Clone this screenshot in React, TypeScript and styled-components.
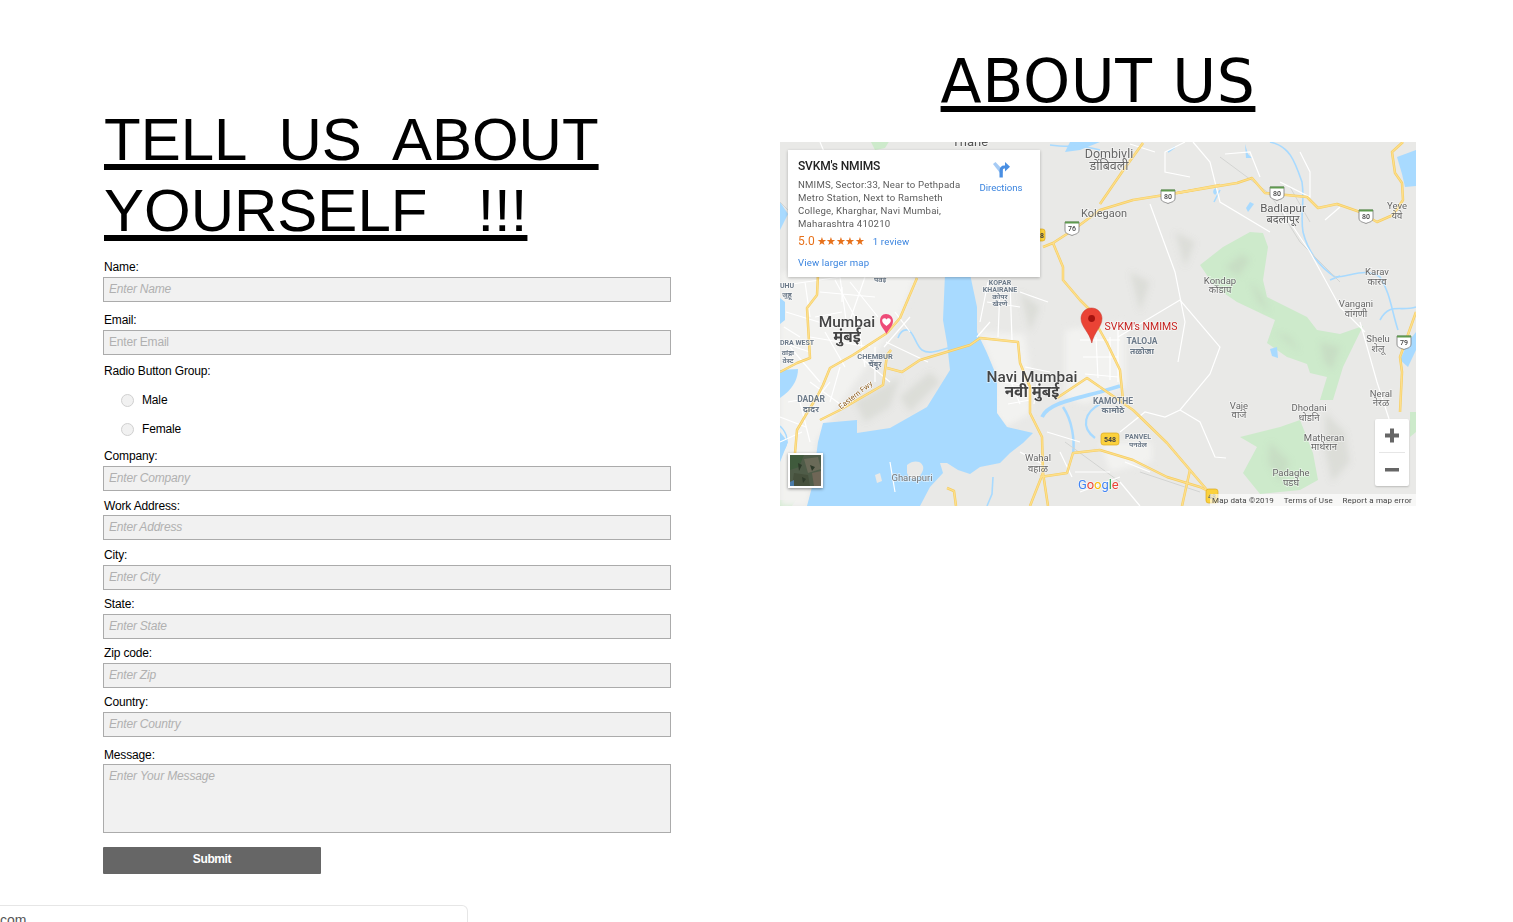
import React from "react";
import styled, { createGlobalStyle } from "styled-components";

const Global = createGlobalStyle`
  html, body { margin: 0; padding: 0; background: #fff; height: 922px; overflow: hidden; }
  body { font-family: "Liberation Sans", Arial, sans-serif; color: #000; }
  * { box-sizing: border-box; }
`;

const Page = styled.div`
  display: flex;
  align-items: flex-start;
  width: 1513px;
  height: 905px;
  padding-left: 103px;
`;
const FormColumn = styled.section`
  width: 568px;
  padding-top: 104px;
`;
const InfoColumn = styled.section`
  width: 636px;
  margin-left: 109px;
  padding-top: 46px;
`;
const Heading = styled.h1`
  margin: 0;
  font-size: 60px;
  font-weight: 400;
  line-height: 71px;
  text-decoration: underline;
  text-decoration-thickness: 6px;
  text-decoration-skip-ink: none;
  text-underline-offset: 4px;
  white-space: pre-wrap;
`;
const FormHeading = styled(Heading)`
  margin-left: 1px;
  margin-bottom: 14px;
`;
const AboutHeading = styled(Heading)`
  text-align: center;
  margin-bottom: 25px;
  font-family: "DejaVu Sans", Verdana, sans-serif;
  letter-spacing: 0.6px;
`;
const Field = styled.div<{ $top: number }>`
  margin-top: ${(p) => p.$top}px;
`;
const Label = styled.label<{ $gap?: number }>`
  display: block;
  font-size: 12px;
  line-height: 14px;
  letter-spacing: -0.15px;
  margin-left: 1px;
  margin-bottom: ${(p) => p.$gap ?? 3}px;
`;
const Input = styled.input<{ $plain?: boolean }>`
  display: block;
  width: 568px;
  height: 25px;
  padding: 0 5px 2px;
  background: #f1f1f1;
  border: 1px solid #ababab;
  font: 12px "Liberation Sans", Arial, sans-serif;
  letter-spacing: -0.2px;
  &::placeholder {
    color: #b0b0b0;
    font-style: ${(p) => (p.$plain ? "normal" : "italic")};
    opacity: 1;
  }
`;
const TextArea = styled.textarea`
  display: block;
  width: 568px;
  height: 69px;
  padding: 4px 5px;
  background: #f1f1f1;
  border: 1px solid #ababab;
  resize: none;
  font: 12px "Liberation Sans", Arial, sans-serif;
  letter-spacing: -0.15px;
  &::placeholder { color: #b0b0b0; font-style: italic; opacity: 1; }
`;
const RadioRow = styled.label`
  display: flex;
  align-items: center;
  height: 14px;
  margin: 15px 0 0 18px;
  font-size: 12px;
  letter-spacing: -0.15px;
`;
const RadioMark = styled.span`
  width: 13px;
  height: 13px;
  border-radius: 50%;
  background: #f1f1f1;
  border: 1px solid #d0d0d0;
  margin-right: 8px;
`;
const SubmitButton = styled.button`
  display: block;
  width: 218px;
  height: 27px;
  margin-top: 14px;
  padding: 0 0 3px;
  border: 0;
  border-radius: 1px;
  background: #666;
  color: #fff;
  font: 700 12px "Liberation Sans", Arial, sans-serif;
  letter-spacing: -0.4px;
`;
const FooterBox = styled.div`
  width: 468px;
  height: 30px;
  padding-top: 6px;
  border: 1px solid #e6e6e6;
  border-left: 0;
  border-radius: 0 6px 0 0;
  font-size: 14px;
  color: #555;
`;
const MapFrame = styled.div`
  position: relative;
  width: 636px;
  height: 364px;
  overflow: hidden;
  background: #e9e9e7;
  font-family: Roboto, sans-serif;
`;
const MapArt = styled.svg`
  display: block;
  width: 636px;
  height: 364px;
`;
const InfoCard = styled.div`
  position: absolute;
  left: 8px;
  top: 8px;
  width: 252px;
  height: 127px;
  padding: 9px 10px;
  background: #fff;
  box-shadow: 0 1px 3px rgba(0, 0, 0, 0.25);
  display: flex;
  justify-content: space-between;
`;
const CardMain = styled.div`
  width: 170px;
`;
const PlaceName = styled.div`
  font-size: 12px;
  line-height: 15px;
  font-weight: 500;
  letter-spacing: -0.15px;
  color: #222;
`;
const Address = styled.div`
  margin-top: 4px;
  font-size: 9.6px;
  line-height: 13px;
  letter-spacing: 0.2px;
  color: #5b5b5b;
`;
const RatingRow = styled.div`
  display: flex;
  align-items: center;
  height: 16px;
  margin-top: 3px;
  font-size: 9.6px;
  letter-spacing: 0.2px;
  color: #3a84df;
`;
const Score = styled.span`
  font-size: 12px;
  letter-spacing: 0;
  color: #e7711b;
`;
const Stars = styled.span`
  font-size: 11px;
  letter-spacing: -0.4px;
  color: #e7711b;
  margin: 0 8px 0 2px;
`;
const LargerLink = styled.div`
  margin-top: 8px;
  font-size: 9.6px;
  letter-spacing: 0.15px;
  color: #3a84df;
`;
const DirectionsBox = styled.div`
  display: flex;
  flex-direction: column;
  align-items: center;
  width: 46px;
  margin: 2px 6px 0 0;
  font-size: 9.6px;
  color: #3a84df;
`;
const DirectionsIcon = styled.svg`
  width: 18px;
  height: 17px;
  margin-bottom: 4px;
`;
const Zoomer = styled.div`
  position: absolute;
  right: 7px;
  top: 277px;
  width: 34px;
  height: 67px;
  background: #fff;
  border-radius: 2px;
  box-shadow: 0 1px 2px rgba(0, 0, 0, 0.2);
  display: flex;
  flex-direction: column;
  align-items: center;
`;
const ZoomKey = styled.svg`
  width: 34px;
  height: 33px;
`;
const ZoomRule = styled.div`
  width: 26px;
  height: 1px;
  background: #e6e6e6;
`;
const Thumb = styled.svg`
  position: absolute;
  left: 8px;
  top: 311px;
  width: 35px;
  height: 35px;
  border: 2px solid #fff;
  box-shadow: 0 1px 3px rgba(0, 0, 0, 0.45);
`;
const Attribution = styled.div`
  position: absolute;
  right: 0;
  bottom: 0;
  width: 206px;
  height: 12px;
  padding: 0 4px 0 2px;
  display: flex;
  justify-content: space-between;
  align-items: center;
  background: rgba(255, 255, 255, 0.62);
  font-size: 8px;
  letter-spacing: 0.15px;
  color: #444;
`;

const urban = [
  "M0,130 L137,130 L120,176 L100,205 L60,262 L36,300 L28,364 L0,364 Z",
  "M198,190 L245,192 L252,240 L250,272 L225,285 L214,270 L216,232 Z",
  "M285,188 L345,180 L345,245 L305,262 L285,255 Z",
  "M320,300 L372,300 L372,320 L330,330 Z",
];
const water = [
  "M165,132 L190,132 L197,165 L197,190 L207,211 L217,235 L217,271 L227,285 L253,291 L243,301 L230,311 L220,321 L200,325 L190,332 L178,328 L167,321 L160,321 L163,331 L150,345 L140,364 L27,364 L32,345 L38,300 L43,281 L77,278 L77,291 L110,286 L147,265 L170,228 L167,201 L163,178 Z",
  "M0,228 L18,227 C18,238 12,248 0,256 Z",
  "M0,156 L5,160 L5,178 L0,182 Z",
  "M0,60 L8,72 L0,88 Z",
  "M617,15 L636,8 L636,44 L625,45 L622,32 Z",
  "M290,0 L320,0 L300,8 L285,10 Z",
  "M636,190 L628,200 L620,218 L628,225 L636,208 Z",
  "M436,46 C438,50 436,54 434,52 C432,50 434,46 436,46 Z",
  "M470,60 L474,62 L468,70 L466,66 Z",
  "M490,207 L497,205 L498,216 L492,214 Z",
  "M465,2 L468,12 L472,16 L466,16 Z",
  "M0,290 L8,300 L0,320 Z",
];
const creeks: [string, number][] = [
  ["M270,3 C290,6 300,2 320,8", 1.6],
  ["M490,0 C510,4 515,20 522,40 C525,60 520,70 523,90 C528,110 540,125 555,135 C570,135 585,125 600,135 C610,150 612,170 618,188", 1.6],
  ["M118,196 C120,190 123,187 128,188 C134,190 136,204 142,208 C148,212 155,210 168,206", 1.6],
  ["M262,275 C268,262 290,258 320,250 L340,244", 3.8],
  ["M283,265 C292,278 295,298 293,312", 2.5],
  ["M320,262 C305,270 300,285 315,296", 2.2],
  ["M213,335 L212,352 L207,364", 1.6],
  ["M600,178 C610,160 620,170 636,165", 1.6],
  ["M550,138 L560,134", 1.6],
  ["M440,48 L434,60", 1.6],
  ["M395,5 L388,10", 1.6],
  ["M0,284 C8,292 10,300 2,310", 1.6],
];
const greens = [
  "M420,123 L443,105 L470,90 L483,91 L488,105 L483,138 L487,155 L527,175 L537,188 L560,192 L583,184 L563,225 L553,258 L540,258 L547,235 L530,231 L527,222 L507,215 L487,201 L495,178 L457,160 L435,145 Z",
  "M460,295 L500,285 L520,278 L533,311 L538,338 L520,348 L480,352 L463,331 L477,305 Z",
  "M90,-2 L110,-2 L105,6 L95,8 Z",
  "M630,270 L636,270 L636,290 L630,295 Z",
  "M0,358 L16,358 L12,364 L0,364 Z",
  "M103,150 L110,143 L111,146 L106,155 Z",
];
const shades = [
  "M445,125 L462,112 L470,118 L458,135 Z",
  "M470,140 L478,160 L490,170 L480,150 Z",
  "M495,190 L520,210 L510,195 Z",
  "M540,200 L560,205 L552,228 L544,220 Z",
  "M545,270 L565,290 L570,320 L552,340 L545,310 Z",
  "M490,300 L510,320 L500,340 L488,320 Z",
  "M120,255 L150,230 L160,240 L130,270 Z",
  "M75,260 L120,235 L110,265 L85,280 Z",
  "M395,90 L415,100 L405,125 Z",
  "M350,130 L370,140 L360,170 Z",
  "M240,150 L260,165 L250,190 Z",
];
const highways = [
  "M263,105 L273,101 L293,88 L320,68 L353,58 L397,51 L457,41 L472,36 L485,51 L527,55 L538,66 L557,62 L580,70 L597,80 L613,73 L623,58 L622,41 L615,31 L612,10 L623,0",
  "M320,62 L342,30 L363,1",
  "M397,51 L440,43",
  "M273,101 L283,125 L283,138 L300,158 L310,168 L318,185 L327,201 L340,228 L343,258",
  "M320,245 L353,268 L387,301 L410,328 L427,348",
  "M320,308 L353,318 L387,335 L420,345 L434,352",
  "M410,328 L402,364",
  "M38,133 L37,153 L27,166 L30,216 L17,221 L0,230",
  "M137,136 L120,176 L107,191 L73,213 L50,226 L43,243 L38,253 L27,271 L17,288 L15,311",
  "M40,278 L60,268 L103,243 L107,213 L111,208",
  "M107,226 L122,230 L140,218 L190,203 L200,196 L238,200 L240,221 L250,245 L250,271 L262,295 L263,331 L250,364",
  "M260,335 L287,331 L293,311 L320,308",
  "M277,256 L307,236 L320,245",
  "M263,331 L268,364",
  "M167,346 L174,349 L176,364",
  "M620,270 L622,230 L620,215 L636,170",
];
const lanes = [
  "M12,142 L60,135 M25,140 L30,175 M60,135 L66,178 M6,170 L55,185 M0,200 L30,210 M45,190 L65,225 M60,225 L50,260 M78,180 L85,225 M30,240 L60,262 M20,260 L30,300 M0,300 L22,290 M70,140 L98,175",
  "M115,170 L130,190 M130,175 L104,205 M4,185 L20,195 M40,150 L95,155 M55,138 L75,175 M85,135 L70,178 M35,175 L62,170 M30,195 L90,205 M10,205 L40,240 M8,260 L36,255 M30,265 L50,240 M0,275 L26,285 M62,145 L62,160",
  "M106,200 L148,220 M95,205 L95,240 M80,215 L110,240",
  "M200,180 L208,140 M220,145 L218,195 M230,140 L232,198 M240,150 L268,160 M207,160 L240,165 M197,195 L210,180",
  "M225,240 L270,248 M228,262 L250,258 M245,225 L270,230 M228,232 L240,262 M258,235 L254,262 M267,290 L300,300 M240,310 L262,322 M280,310 L292,335 M295,330 L330,330",
  "M300,198 L340,198 M303,215 L338,215 M305,232 L338,235 M316,195 L318,236 M330,195 L330,238 M338,180 L338,240",
  "M338,195 L400,158 L440,205 L430,232 L400,268 L385,275 L365,270 L340,290 M400,268 L420,280 L435,315 L446,316",
  "M413,0 L430,20 L440,60 L490,90 M405,0 L385,10 L385,30 L410,35 M445,12 L470,10 L480,35 M500,40 L530,55 L530,30 L520,10",
  "M370,62 L395,130 L405,180 L398,220 M500,65 L530,110 L560,165 L585,190 M560,65 L545,78 M580,180 L597,240 L610,280 M375,10 L350,2",
  "M120,10 L108,30 M40,0 L65,60 L110,70 L140,80",
  "M110,320 L115,350 M300,350 L340,335 M340,340 L360,364 M345,320 L370,330",
];
const greyLines = ["M440,15 L490,52 L520,100 L560,140", "M510,45 L530,80 M360,330 L420,350 M285,300 L340,340 M0,60 L20,80"];

const labels: [number, number, string, number, string, number?][] = [
  [190, 1, "Thane", 13, "#555"],
  [329, 13, "Dombivli", 12.5, "#666"], [329, 25, "डोंबिवली", 12.5, "#666"],
  [324, 72, "Kolegaon", 11, "#666"],
  [503, 67, "Badlapur", 11.5, "#5a5a5a"], [503, 78, "बदलापूर", 11, "#5a5a5a"],
  [617, 64, "Yeve", 9.5, "#666"], [617, 74, "येवे", 9.5, "#666"],
  [440, 139, "Kondap", 9.5, "#666"], [440, 148, "कोंडाप", 9.5, "#666"],
  [597, 130, "Karav", 9.5, "#666"], [597, 140, "कारव", 9.5, "#666"],
  [576, 162, "Vangani", 9.5, "#666"], [576, 172, "वांगणी", 9.5, "#666"],
  [598, 197, "Shelu", 9.5, "#666"], [598, 207, "शेलू", 9.5, "#666"],
  [601, 252, "Neral", 9.5, "#666"], [601, 261, "नेरळ", 9.5, "#666"],
  [459, 264, "Vaje", 9.5, "#666"], [459, 273, "वाजे", 9.5, "#666"],
  [529, 266, "Dhodani", 9.5, "#666"], [529, 276, "धोडनि", 9.5, "#666"],
  [544, 296, "Matheran", 9.5, "#666"], [544, 305, "माथेरान", 9.5, "#666"],
  [511, 331, "Padaghe", 9.5, "#666"], [511, 341, "पडघे", 9.5, "#666"],
  [362, 200, "TALOJA", 8.5, "#6c7a89", 700], [362, 210, "तळोजा", 8.5, "#6c7a89", 700],
  [333, 260, "KAMOTHE", 8.5, "#6c7a89", 700], [333, 269, "कामोठे", 8.5, "#6c7a89", 700],
  [358, 295, "PANVEL", 7, "#6c7a89", 700], [358, 303, "पनवेल", 7, "#6c7a89", 700],
  [252, 236, "Navi Mumbai", 15.4, "#444", 500], [252, 251, "नवी मुंबई", 15.4, "#444", 700],
  [67, 181, "Mumbai", 15.4, "#444", 500], [67, 196, "मुंबई", 15.4, "#444", 700],
  [95, 215, "CHEMBUR", 7.5, "#6c7a89", 700], [95, 223, "चेंबूर", 7.5, "#6c7a89", 700],
  [31, 258, "DADAR", 8.5, "#6c7a89", 700], [31, 268, "दादर", 8.5, "#6c7a89", 700],
  [220, 141, "KOPAR", 7, "#6c7a89", 700], [220, 148, "KHAIRANE", 7, "#6c7a89", 700],
  [220, 155, "कोपर", 7, "#6c7a89", 700], [220, 162, "खैरणे", 7, "#6c7a89", 700],
  [258, 316, "Wahal", 9.5, "#666"], [258, 327, "वहाळ", 9.5, "#666"],
  [132, 336, "Gharapuri", 9.5, "#777"],
  [17, 201, "DRA WEST", 7, "#6c7a89", 700], [8, 211, "वांद्रा", 7, "#6c7a89", 700], [8, 219, "वेस्ट", 7, "#6c7a89", 700],
  [7, 144, "UHU", 7, "#6c7a89", 700], [7, 153, "जुहू", 7, "#6c7a89", 700],
  [100, 138, "पवई", 7, "#6c7a89", 700],
  [361, 185, "SVKM's NMIMS", 10.5, "#c5221f"],
];

const shields: [number, number, string][] = [
  [388, 54, "80"], [497, 51, "80"], [586, 74, "80"], [292, 86, "76"], [624, 200, "79"],
];

const App: React.FC = () => (
  <>
    <Global />
    <Page>
      <FormColumn>
        <FormHeading>
          {"TELL  US  ABOUT"}
          <br />
          {"YOURSELF   !!!"}
        </FormHeading>
        <Field $top={0}>
          <Label>Name:</Label>
          <Input placeholder="Enter Name" />
        </Field>
        <Field $top={11}>
          <Label>Email:</Label>
          <Input $plain placeholder="Enter Email" />
        </Field>
        <Field $top={9}>
          <Label>Radio Button Group:</Label>
          <RadioRow><RadioMark />Male</RadioRow>
          <RadioRow><RadioMark />Female</RadioRow>
        </Field>
        <Field $top={13}>
          <Label>Company:</Label>
          <Input placeholder="Enter Company" />
        </Field>
        <Field $top={8}>
          <Label $gap={2}>Work Address:</Label>
          <Input placeholder="Enter Address" />
        </Field>
        <Field $top={8}>
          <Label>City:</Label>
          <Input placeholder="Enter City" />
        </Field>
        <Field $top={7}>
          <Label>State:</Label>
          <Input placeholder="Enter State" />
        </Field>
        <Field $top={7}>
          <Label>Zip code:</Label>
          <Input placeholder="Enter Zip" />
        </Field>
        <Field $top={7}>
          <Label>Country:</Label>
          <Input placeholder="Enter Country" />
        </Field>
        <Field $top={11}>
          <Label $gap={2}>Message:</Label>
          <TextArea placeholder="Enter Your Message" />
        </Field>
        <SubmitButton>Submit</SubmitButton>
      </FormColumn>
      <InfoColumn>
        <AboutHeading>ABOUT US</AboutHeading>
        <MapFrame>
          <MapArt viewBox="0 0 636 364">
            <defs>
              <filter id="soft" x="-5%" y="-5%" width="110%" height="110%">
                <feGaussianBlur stdDeviation="0.3" />
              </filter>
              <filter id="haze" x="-30%" y="-30%" width="160%" height="160%">
                <feGaussianBlur stdDeviation="3" />
              </filter>
            </defs>
            <g filter="url(#soft)">
              {greens.map((d) => <path key={d} d={d} fill="#cdeacb" />)}
              <g filter="url(#haze)">
                {urban.map((d) => <path key={d} d={d} fill="#f2f2f0" />)}
                {shades.map((d) => <path key={d} d={d} fill="#b9bdb4" opacity="0.28" />)}
              </g>
              {water.map((d) => <path key={d} d={d} fill="#a8daff" />)}
              {creeks.map(([d, w]) => <path key={d} d={d} fill="none" stroke="#a8daff" strokeWidth={w} />)}
              <path d="M127,323 C135,316 145,320 143,328 C140,338 130,340 127,331 Z" fill="#e9e9e7" />
              <path d="M95,333 L100,331 L102,339 L97,341 Z" fill="#e9e9e7" />
              {greyLines.map((d) => <path key={d} d={d} fill="none" stroke="#d3d4d2" strokeWidth="1" />)}
              {lanes.map((d) => <path key={d} d={d} fill="none" stroke="#fff" strokeWidth="1.2" />)}
              {highways.map((d) => <path key={d} d={d} fill="none" stroke="#f5cd62" strokeWidth="2.5" strokeLinejoin="round" />)}
              {highways.map((d) => <path key={d} d={d} fill="none" stroke="#fddf8c" strokeWidth="1.3" strokeLinejoin="round" />)}
            </g>
            {labels.map(([x, y, text, size, color, weight]) => (
              <text
                key={`${x}-${y}-${text}`}
                x={x}
                y={y}
                textAnchor="middle"
                dominantBaseline="middle"
                fontFamily='Roboto, "Noto Sans", "Noto Sans Devanagari", sans-serif'
                fontSize={size}
                fontWeight={weight ?? 400}
                fill={color}
                stroke="#fff"
                strokeOpacity="0.55"
                strokeWidth="1.5"
                paintOrder="stroke"
              >
                {text}
              </text>
            ))}
            <text
              x={0}
              y={0}
              transform="translate(77,255) rotate(-38)"
              textAnchor="middle"
              fontFamily="Roboto, sans-serif"
              fontSize="7.5"
              fill="#8a5a1c"
              stroke="#fff"
              strokeWidth="1.2"
              paintOrder="stroke"
            >
              Eastern Fwy
            </text>
            {shields.map(([x, y, n]) => (
              <g key={`${x}-${y}`} transform={`translate(${x},${y})`}>
                <path d="M-7,-6 L7,-6 L7,2 C7,6 3,6 0,7.5 C-3,6 -7,6 -7,2 Z" fill="#fff" stroke="#777" strokeWidth="0.8" />
                <path d="M-7,-6.5 L7,-6.5 L7,-4.5 L-7,-4.5 Z" fill="#5f9a4e" />
                <text x="0" y="2.5" textAnchor="middle" fontFamily="Roboto, sans-serif" fontSize="7" fontWeight="500" fill="#444">{n}</text>
              </g>
            ))}
            <rect x="321" y="291" width="18" height="12" rx="2.5" fill="#fbd13d" stroke="#dca91d" strokeWidth="0.7" />
            <text x="330" y="300" textAnchor="middle" fontFamily="Roboto, sans-serif" fontSize="7" fontWeight="700" fill="#444">548</text>
            <rect x="426" y="347" width="12" height="14" rx="2.5" fill="#fbd13d" stroke="#dca91d" strokeWidth="0.7" />
            <text x="432" y="357" textAnchor="middle" fontFamily="Roboto, sans-serif" fontSize="7" fontWeight="700" fill="#776">48</text>
            <rect x="256" y="87" width="9" height="12" rx="2.5" fill="#fbd13d" stroke="#dca91d" strokeWidth="0.7" />
            <text x="260" y="96" fontFamily="Roboto, sans-serif" fontSize="7" fontWeight="700" fill="#444">8</text>
            <text x="298" y="347" fontFamily="Roboto, sans-serif" fontSize="13" fontWeight="400" letterSpacing="-0.1" stroke="#fff" strokeOpacity="0.6" strokeWidth="1.5" paintOrder="stroke">
              <tspan fill="#4285f4">G</tspan><tspan fill="#ea4335">o</tspan><tspan fill="#fbbc05">o</tspan><tspan fill="#4285f4">g</tspan><tspan fill="#34a853">l</tspan><tspan fill="#ea4335">e</tspan>
            </text>
            <path d="M106,172 C110,172 113,175 113,179 C113,184 109,187 106.5,192 C104,187 100,184 100,179 C100,175 102,172 106,172 Z" fill="#ee4b78" />
            <path d="M106.5,184 C103,181.5 102.2,180 102.2,178.6 C102.2,176 105.5,175.4 106.5,177.6 C107.5,175.4 110.8,176 110.8,178.6 C110.8,180 110,181.5 106.5,184 Z" fill="#fff" />
            <path d="M311.5,166 C317.5,166 322,170.8 322,176.5 C322,185 314,190 311.8,201 C309.5,190 301,185 301,176.5 C301,170.8 305.5,166 311.5,166 Z" fill="#ea4335" stroke="#c5362c" strokeWidth="0.5" />
            <circle cx="311.6" cy="176.5" r="3.4" fill="#a4130f" />
          </MapArt>
          <InfoCard>
            <CardMain>
              <PlaceName>SVKM's NMIMS</PlaceName>
              <Address>
                NMIMS, Sector:33, Near to Pethpada
                <br />Metro Station, Next to Ramsheth
                <br />College, Kharghar, Navi Mumbai,
                <br />Maharashtra 410210
              </Address>
              <RatingRow>
                <Score>5.0</Score>
                <Stars>★★★★★</Stars>
                1 review
              </RatingRow>
              <LargerLink>View larger map</LargerLink>
            </CardMain>
            <DirectionsBox>
              <DirectionsIcon viewBox="0 0 18 17">
                <path d="M1,3 L3.5,1 L10.5,8.5 L10.5,12 L8,12 Z" fill="#a6cbf5" />
                <path d="M7.5,16.5 L7.5,9.5 C7.5,6.5 9.5,4.5 12,4.5 L13,4.5 L13,1 L18,5.8 L13,10.5 L13,7.5 L12.3,7.5 C11.3,7.5 10.8,8.4 10.8,9.5 L10.8,16.5 Z" fill="#4a8fe3" />
              </DirectionsIcon>
              Directions
            </DirectionsBox>
          </InfoCard>
          <Thumb viewBox="0 0 31 31" preserveAspectRatio="none">
            <rect width="31" height="31" fill="#4f5c48" />
            <path d="M0,0 L14,0 L9,12 L0,15 Z" fill="#3f5a3c" />
            <path d="M14,4 L28,2 L31,14 L18,18 Z" fill="#6a6a58" />
            <path d="M4,18 L18,20 L20,31 L2,31 Z" fill="#46503c" />
            <path d="M22,18 L31,16 L31,31 L24,31 Z" fill="#6f6656" />
            <path d="M0,27 L4,25 L4,31 L0,31 Z" fill="#4b7ba8" />
            <path d="M8,8 L12,10 L9,16 Z M20,10 L25,12 L22,16 Z M12,22 L16,24 L13,28 Z" fill="#2e3a2a" />
          </Thumb>
          <Zoomer>
            <ZoomKey viewBox="0 0 34 33">
              <path d="M10,14.5 L15,14.5 L15,9.5 L19,9.5 L19,14.5 L24,14.5 L24,18.5 L19,18.5 L19,23.5 L15,23.5 L15,18.5 L10,18.5 Z" fill="#666" />
            </ZoomKey>
            <ZoomRule />
            <ZoomKey viewBox="0 0 34 33">
              <rect x="10" y="15" width="14" height="3.5" fill="#666" />
            </ZoomKey>
          </Zoomer>
          <Attribution>
            <span>Map data ©2019</span>
            <span>Terms of Use</span>
            <span>Report a map error</span>
          </Attribution>
        </MapFrame>
      </InfoColumn>
    </Page>
    <FooterBox>com</FooterBox>
  </>
);

export default App;
